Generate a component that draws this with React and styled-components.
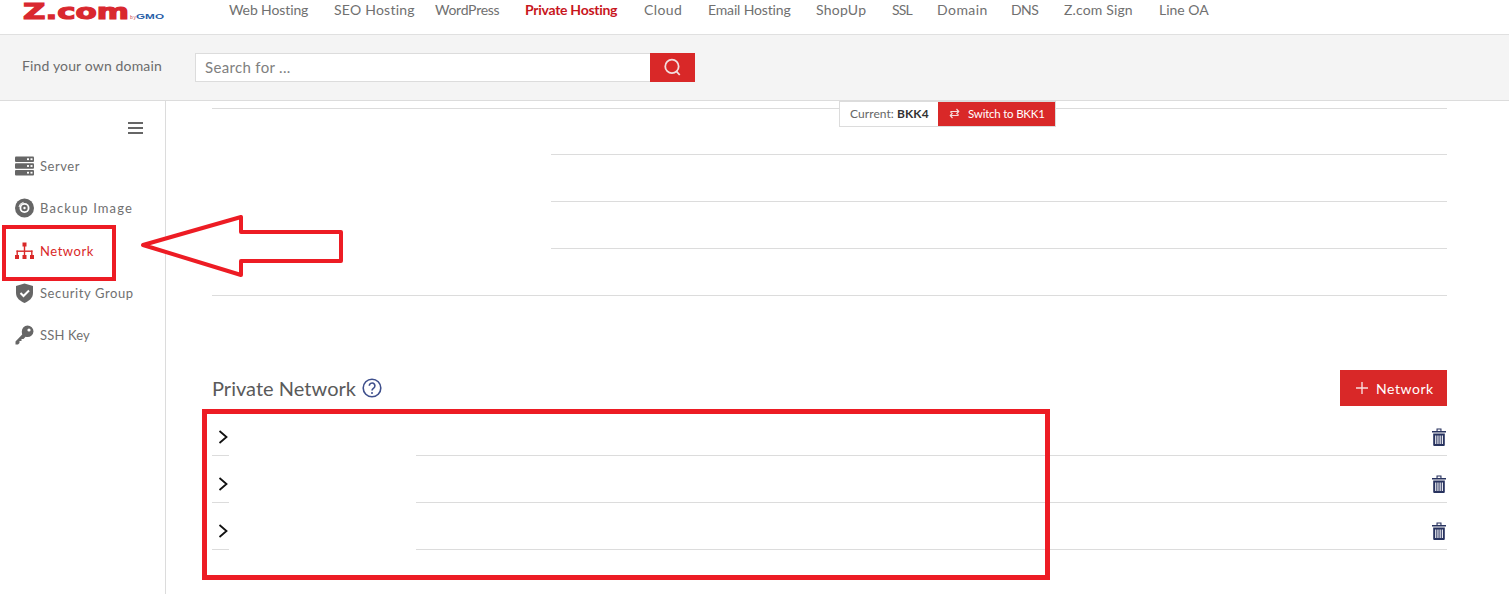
import React from 'react';
import styled, { createGlobalStyle } from 'styled-components';

const Global = createGlobalStyle`
  html, body { margin: 0; padding: 0; height: 594px; overflow: hidden; background: #fff; }
  body { font-family: "Lato", "Liberation Sans", sans-serif; color: #666; }
  * { box-sizing: border-box; }
`;
const Page = styled.div`position: relative; width: 1509px; height: 594px; overflow: hidden; display: flex; flex-direction: column;`;
const TopBar = styled.header`height: 35px; border-bottom: 1px solid #e0e0e0; display: flex; background: #fff; flex: none;`;
const LogoBox = styled.a`width: 229px; flex: none; height: 34px; overflow: hidden; display: block;`;
const NavList = styled.nav`display: flex; height: 18px; align-items: center;`;
const NavItem = styled.a`
  display: block; width: ${p => p.$w}px; flex: none; white-space: nowrap;
  font-size: 14px; letter-spacing: ${p => p.$ls}px; color: ${p => p.$active ? '#c8161d' : '#707070'}; font-weight: ${p => p.$active ? 700 : 400};
`;
const SearchBand = styled.div`height: 66px; flex: none; background: #f4f4f4; border-bottom: 1px solid #dcdcdc; display: flex; align-items: flex-start; padding: 18px 0 0 22px;`;
const SearchLabel = styled.span`width: 173px; flex: none; font-size: 14px; letter-spacing: .15px; line-height: 25px; color: #6c6c6c;`;
const SearchInput = styled.div`width: 455px; height: 29px; background: #fff; border: 1px solid #dcdcdc; border-right: 0; font-size: 15px; letter-spacing: .33px; line-height: 27px; padding-left: 9px; color: #808080;`;
const SearchButton = styled.button`width: 45px; height: 29px; background: #d92828; border: 0; padding: 0; display: flex; align-items: center; justify-content: center;`;
const Body = styled.div`display: flex; flex: 1; min-height: 0;`;
const Sidebar = styled.aside`width: 166px; flex: none; border-right: 1px solid #dcdcdc; padding: 21px 22px 0 15px; display: flex; flex-direction: column;`;
const Burger = styled.button`align-self: flex-end; width: 15px; height: 12px; padding: 0; border: 0; background: none; display: flex; flex-direction: column; justify-content: space-between; margin-bottom: 11px;`;
const BurgerBar = styled.span`display: block; height: 2px; background: #666;`;
const SideItem = styled.a`
  height: 42.3px; display: flex; align-items: center; gap: 6px; white-space: nowrap; font-size: 13px; letter-spacing: ${p => p.$ls}px;
  color: ${p => p.$active ? '#d92828' : '#707070'};
  svg { flex: none; }
`;
const Main = styled.main`flex: 1; min-width: 0; padding: 7px 62px 0 46px; position: relative;`;
const SpecTable = styled.div`border-top: 1px solid #dcdcdc; margin-bottom: 74px;`;
const SpecRow = styled.div`display: grid; grid-template-columns: 339px 1fr; height: ${p => p.$h}px;`;
const SpecKey = styled.div`border-bottom: ${p => p.$line ? '1px solid #dcdcdc' : '0'};`;
const SpecValue = styled.div`border-bottom: 1px solid #dcdcdc;`;
const SectionHead = styled.div`display: flex; align-items: center; justify-content: space-between; height: 36px; margin-bottom: 3px;`;
const SectionTitle = styled.h2`margin: 0 0 1px; display: flex; align-items: center; gap: 6px; font-size: 20px; font-weight: 400; letter-spacing: .03px; color: #5a5a5a;`;
const AddButton = styled.button`width: 107px; height: 36px; background: #d92828; color: #fff; border: 0; padding: 0 0 0 16px; display: flex; align-items: center; justify-content: flex-start; gap: 8px; font: 400 14px "Lato", sans-serif; letter-spacing: .55px;`;
const NetRow = styled.div`display: grid; grid-template-columns: 17px 187px 1fr; height: 47px;`;
const NetCell = styled.div`border-bottom: 1px solid #dcdcdc; display: flex; align-items: center; padding-top: 10px; justify-content: ${p => p.$end ? 'flex-end' : 'flex-start'}; padding-right: ${p => p.$end ? '1px' : '0'};`;
const NetGap = styled.div``;
const Chevron = styled.svg`margin-left: 6px; flex: none; overflow: visible;`;
const Switcher = styled.div`position: absolute; left: 673px; top: 0; height: 26px; display: flex; background: #fff; border: 1px solid #dcdcdc; white-space: nowrap;`;
const CurrentLabel = styled.div`width: 98px; padding-left: 10px; font-size: 12px; letter-spacing: .07px; line-height: 23px; color: #666; b { color: #333; font-weight: 700; }`;
const SwitchButton = styled.div`width: 117px; background: #d92828; color: #fff; font-size: 11.5px; letter-spacing: -.22px; display: flex; align-items: center; gap: 8px; padding: 0 0 2px 11px;`;
const Mark = styled.div`position: absolute; border: 4px solid #ed1c24; pointer-events: none;`;
const NetMark = styled(Mark)`left: 2px; top: 225px; width: 114px; height: 56px;`;
const TableMark = styled(Mark)`left: 202px; top: 409px; width: 848px; height: 171px; border-width: 5px;`;
const Arrow = styled.svg`position: absolute; left: 138px; top: 212px; pointer-events: none;`;

const navs = [
  ['Web Hosting', 105, -.11], ['SEO Hosting', 101, .24], ['WordPress', 90, -.27], ['Private Hosting', 119, -.28, true],
  ['Cloud', 64, .4], ['Email Hosting', 108, -.15], ['ShopUp', 76, .25], ['SSL', 45, -.9], ['Domain', 74, .45], ['DNS', 53, -.6], ['Z.com Sign', 95, .15], ['Line OA', 60, 0],
];

const ServerIcon = () => <svg width="19" height="20" viewBox="0 0 19 20"><g fill="#666"><rect y="0.5" width="19" height="5.4" rx="1"/><rect y="7.3" width="19" height="5.4" rx="1"/><rect y="14" width="19" height="5.4" rx="1"/></g><g fill="#fff"><rect x="12" y="2.3" width="2" height="1.8"/><rect x="15.5" y="2.3" width="2" height="1.8"/><rect x="12" y="9.1" width="2" height="1.8"/><rect x="15.5" y="9.1" width="2" height="1.8"/><rect x="12" y="15.8" width="2" height="1.8"/><rect x="15.5" y="15.8" width="2" height="1.8"/></g></svg>;
const DiscIcon = () => <svg width="19" height="20" viewBox="0 0 19 20"><circle cx="9.5" cy="10" r="9.5" fill="#666"/><circle cx="9.5" cy="10" r="5" fill="#fff"/><circle cx="9.5" cy="10" r="3.2" fill="#666"/><circle cx="9.5" cy="10" r="1.2" fill="#fff"/><path d="M4 9 A5.5 5.5 0 0 1 8.5 4.4" stroke="#fff" strokeWidth="1" fill="none"/></svg>;
const NetworkIcon = () => <svg width="19" height="20" viewBox="0 0 19 20" fill="#d92828"><rect x="7.5" y="1.5" width="4" height="4"/><rect x="8.8" y="5" width="1.4" height="9"/><rect x="1.5" y="9.5" width="16" height="1.4"/><rect x="1.5" y="9.5" width="1.4" height="5"/><rect x="16.1" y="9.5" width="1.4" height="5"/><rect y="14" width="4" height="4"/><rect x="7.5" y="14" width="4" height="4"/><rect x="15" y="14" width="4" height="4"/></svg>;
const ShieldIcon = () => <svg width="19" height="20" viewBox="0 0 19 20"><path d="M9.5 0.5 L18 3 V10 C18 15 14 18 9.5 20 C5 18 1 15 1 10 V3 Z" fill="#666"/><path d="M5.5 10 L8.5 13 L14 7.5" stroke="#fff" strokeWidth="2" fill="none"/></svg>;
const KeyIcon = () => <svg width="19" height="20" viewBox="0 0 19 20"><path d="M12.5 0.5 A6 6 0 0 1 18.5 6.5 A6 6 0 0 1 12.5 12 C11.8 12 11.2 11.9 10.6 11.7 L8.5 14 H6.5 V16 H4.5 V18 L3 19.5 H0.5 V16.5 L7.2 9.4 C7 8.7 6.8 7.2 6.8 6.5 A6 6 0 0 1 12.5 0.5 Z" fill="#666"/><circle cx="14" cy="5" r="1.6" fill="#fff"/></svg>;

const Trash = () => <svg width="14" height="18" viewBox="0 0 14 18" fill="#28335f"><path d="M0 3h14v1.6H0zM4.5 0.5h5V3H8.4V1.6H5.6V3H4.5z"/><path fillRule="evenodd" d="M1.2 5.5h11.6V17a1 1 0 0 1-1 1H2.2a1 1 0 0 1-1-1zM3.2 7.5v8.5h1.1V7.5zM5.4 7.5v8.5h1.1V7.5zM7.6 7.5v8.5h1.1V7.5zM9.8 7.5v8.5h1.1V7.5z"/></svg>;

const rows = [0, 1, 2];

export default function App() {
  return (
    <Page>
      <Global />
      <TopBar>
        <LogoBox>
          <svg width="229" height="34" viewBox="0 0 229 34">
            <text x="23" y="19" fill="#d9282f" stroke="#d9282f" strokeWidth="1.2" fontFamily="DejaVu Sans" fontWeight="700" fontSize="22" textLength="106" lengthAdjust="spacingAndGlyphs">Z.com</text>
            <text x="130" y="19" fill="#c8464a" fontFamily="Liberation Sans" fontSize="5" textLength="6">by</text>
            <text x="136" y="19" fill="#2a5fa8" fontFamily="Liberation Sans" fontWeight="700" fontSize="8" textLength="28" lengthAdjust="spacingAndGlyphs">GMO</text>
          </svg>
        </LogoBox>
        <NavList>
          {navs.map(([t, w, ls, a]) => <NavItem key={t} $w={w} $ls={ls} $active={a}>{t}</NavItem>)}
        </NavList>
      </TopBar>
      <SearchBand>
        <SearchLabel>Find your own domain</SearchLabel>
        <SearchInput>Search for ...</SearchInput>
        <SearchButton>
          <svg width="19" height="19" viewBox="0 0 17 17" fill="none" stroke="#f3dede" strokeWidth="1.6"><circle cx="8" cy="7.5" r="6"/><path d="M12 12l3 3.2"/></svg>
        </SearchButton>
      </SearchBand>
      <Body>
        <Sidebar>
          <Burger><BurgerBar /><BurgerBar /><BurgerBar /></Burger>
          <SideItem $ls={.55}><ServerIcon />Server</SideItem>
          <SideItem $ls={1.1}><DiscIcon />Backup Image</SideItem>
          <SideItem $ls={.55} $active><NetworkIcon />Network</SideItem>
          <SideItem $ls={.6}><ShieldIcon />Security Group</SideItem>
          <SideItem $ls={.15}><KeyIcon />SSH Key</SideItem>
        </Sidebar>
        <Main>
          <Switcher>
            <CurrentLabel>Current: <b>BKK4</b></CurrentLabel>
            <SwitchButton>
              <svg width="11" height="11" viewBox="0 0 11 11" fill="none" stroke="#f6dcdc" strokeWidth="1.2"><path d="M2 5V3.5h7.5M7.5 1l2.2 2.5L7.5 6M9 6v1.5H1.5M3.5 5L1.3 7.5 3.5 10"/></svg>
              Switch to BKK1
            </SwitchButton>
          </Switcher>
          <SpecTable>
            <SpecRow $h={46}><SpecKey /><SpecValue /></SpecRow>
            <SpecRow $h={47}><SpecKey /><SpecValue /></SpecRow>
            <SpecRow $h={47}><SpecKey /><SpecValue /></SpecRow>
            <SpecRow $h={47}><SpecKey $line /><SpecValue /></SpecRow>
          </SpecTable>
          <SectionHead>
            <SectionTitle>
              Private Network
              <svg width="20" height="20" viewBox="0 0 20 20" fill="none"><circle cx="10" cy="10" r="8.8" stroke="#3e4f8c" strokeWidth="1.6"/><path d="M7.3 7.8a2.8 2.8 0 1 1 4.4 2.3c-1.1.8-1.7 1.2-1.7 2.5" stroke="#3e4f8c" strokeWidth="1.6"/><circle cx="10" cy="15" r="1" fill="#3e4f8c"/></svg>
            </SectionTitle>
            <AddButton>
              <svg width="12" height="12" viewBox="0 0 12 12" stroke="#f8dcdc" strokeWidth="1.4"><path d="M6 0v12M0 6h12"/></svg>
              Network
            </AddButton>
          </SectionHead>
          {rows.map(r => (
            <NetRow key={r}>
              <NetCell><Chevron width="10" height="14" viewBox="0 0 10 14" fill="none" stroke="#111" strokeWidth="1.8"><path d="M1.5 1l7 6-7 6"/></Chevron></NetCell>
              <NetGap />
              <NetCell $end><Trash /></NetCell>
            </NetRow>
          ))}
        </Main>
      </Body>
      <NetMark />
      <TableMark />
      <Arrow width="210" height="70" viewBox="0 0 210 70" fill="#fff" stroke="#ed1c24" strokeWidth="4" strokeLinejoin="round"><path d="M5 33 L103 5 L103 20 L203 20 L203 49 L103 49 L103 63 Z"/></Arrow>
    </Page>
  );
}
